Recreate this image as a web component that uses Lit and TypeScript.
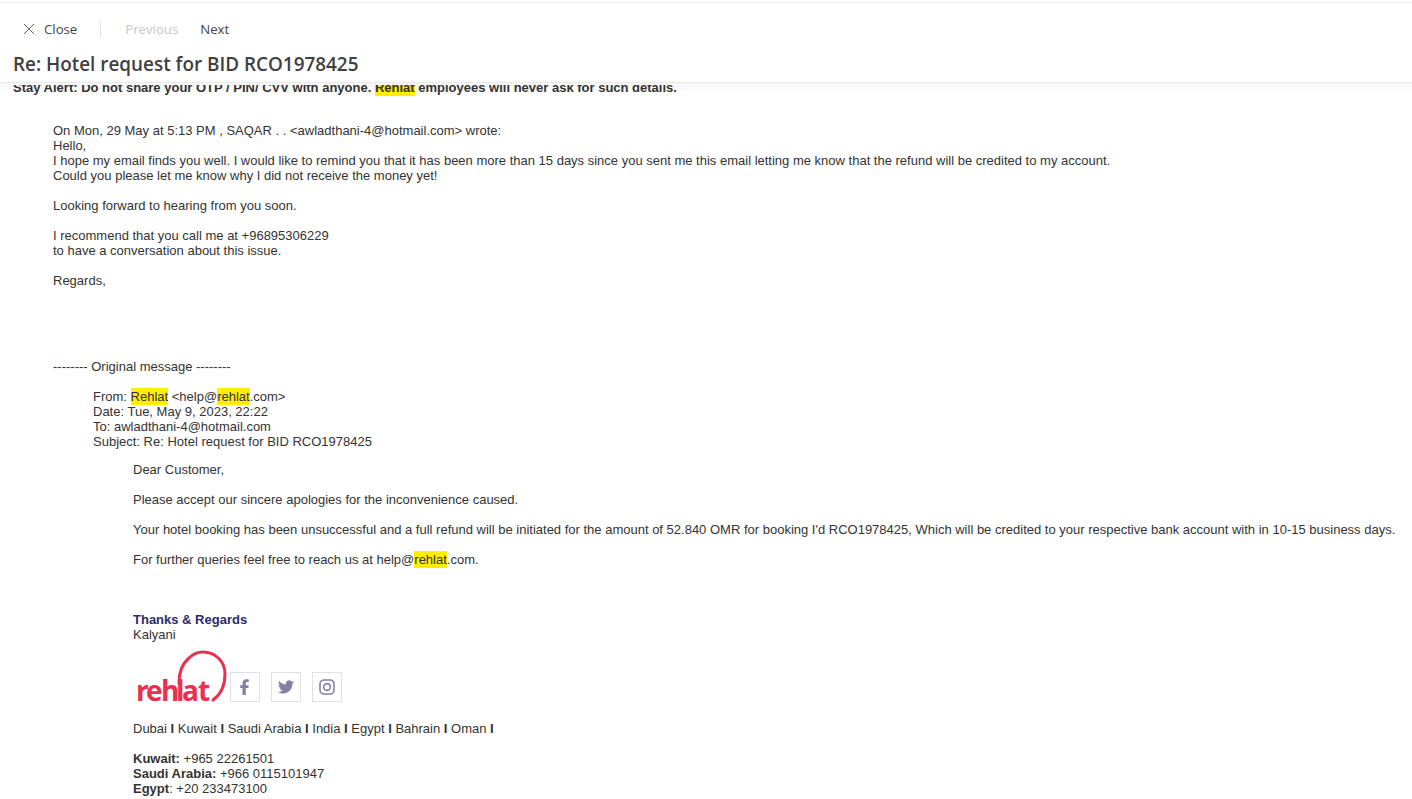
import { LitElement, html, css } from "lit";
import { customElement } from "lit/decorators.js";

@customElement("app-root")
export class AppRoot extends LitElement {
  static styles = css`
    :host {
      display: flex;
      flex-direction: column;
      height: 799px;
      overflow: hidden;
      background: #fff;
      font-family: "Liberation Sans", Arial, sans-serif;
      font-size: 13px;
      line-height: 15px;
      color: #333;
    }
    .panel {
      flex: none;
      height: 79px;
      margin-top: 2px;
      border-top: 1px solid #eeeeee;
      border-bottom: 1px solid #e8e8e8;
      background: #fff;
      font-family: "Open Sans", sans-serif;
      position: relative;
    }
    /* soft shadow under the header, lies over the message */
    .panel::after {
      content: "";
      position: absolute;
      left: 0;
      right: 0;
      top: 80px;
      height: 10px;
      z-index: 1;
      background: linear-gradient(rgba(0, 0, 0, 0.035), rgba(0, 0, 0, 0));
    }
    .bar {
      display: flex;
      align-items: center;
      height: 52px;
      padding-left: 23px;
      font-size: 13.2px;
      color: #444;
    }
    .bar svg {
      width: 12px;
      height: 12px;
      margin-right: 9px;
    }
    .sep {
      width: 1px;
      height: 18px;
      background: #e4e4e4;
      margin: 0 24px 0 23px;
    }
    .off {
      color: #c8c8c8;
      margin-right: 22px;
    }
    h1 {
      margin: -2px 0 0;
      padding-left: 13px;
      font-size: 18.9px;
      line-height: 22px;
      font-weight: 600;
      color: #403f3f;
    }
    .scroll {
      flex: 1;
      min-height: 0;
      margin-top: 2px;
      overflow: hidden;
      padding-left: 13px;
    }
    .inner {
      margin-top: -5px;
    }
    .alert {
      font-weight: 700;
      margin-bottom: 28px;
    }
    .q {
      margin-left: 40px;
    }
    p {
      margin: 0 0 15px;
    }
    .wide {
      white-space: nowrap;
    }
    mark {
      background: #ffee00;
      color: #333;
      padding: 1px 0;
    }
    .gap {
      height: 56px;
    }
    .head {
      margin-bottom: 13px;
    }
    .body p.lead {
      margin-bottom: 45px;
    }
    .thanks {
      font-weight: 700;
      color: #2c2a6b;
    }
    .sign {
      display: flex;
      align-items: flex-end;
      height: 58px;
      margin: 3px 0 18px;
    }
    .logo {
      width: 97px;
      height: 58px;
      flex: none;
    }
    .logo text {
      font-family: "Open Sans", sans-serif;
      font-weight: 700;
      font-size: 28px;
      fill: #e8304f;
    }
    .soc {
      width: 30px;
      height: 30px;
      flex: none;
      box-sizing: border-box;
      border: 1px solid #dfdfe8;
      margin-right: 11px;
      margin-bottom: 1px;
      display: flex;
      align-items: center;
      justify-content: center;
    }
    .soc svg {
      width: 16px;
      height: 16px;
      fill: #8280a6;
    }
    .soc svg.ig {
      fill: none;
      stroke: #8280a6;
      stroke-width: 2.4;
    }
  `;

  render() {
    return html`
      <div class="panel">
        <div class="bar">
          <svg viewBox="0 0 12 12" fill="none" stroke="#666" stroke-width="1">
            <path d="M1 1l10 10M11 1L1 11" />
          </svg>
          <span>Close</span>
          <span class="sep"></span>
          <span class="off">Previous</span>
          <span>Next</span>
        </div>
        <h1>Re: Hotel request for BID RCO1978425</h1>
      </div>
      <div class="scroll">
        <div class="inner">
          <div class="alert">
            Stay Alert: Do not share your OTP / PIN/ CVV with anyone. <mark>Rehlat</mark> employees will never ask for such details.
          </div>
          <div class="q">
            <p>
              On Mon, 29 May at 5:13 PM , SAQAR . . &lt;awladthani-4@hotmail.com&gt; wrote:<br />
              Hello,<br />
              I hope my email finds you well. I would like to remind you that it has been more than 15 days since you sent me this email letting me know that the refund will be credited to my account.<br />
              Could you please let me know why I did not receive the money yet!
            </p>
            <p>Looking forward to hearing from you soon.</p>
            <p>I recommend that you call me at +96895306229<br />to have a conversation about this issue.</p>
            <p>Regards,</p>
            <div class="gap"></div>
            <p>-------- Original message --------</p>
            <div class="q">
              <div class="head">
                From: <mark>Rehlat</mark> &lt;help@<mark>rehlat</mark>.com&gt;<br />
                Date: Tue, May 9, 2023, 22:22<br />
                To: awladthani-4@hotmail.com<br />
                Subject: Re: Hotel request for BID RCO1978425
              </div>
              <div class="q body">
                <p>Dear Customer,</p>
                <p>Please accept our sincere apologies for the inconvenience caused.</p>
                <p class="wide">Your hotel booking has been unsuccessful and a full refund will be initiated for the amount of 52.840 OMR for booking I'd RCO1978425, Which will be credited to your respective bank account with in 10-15 business days.</p>
                <p class="lead">For further queries feel free to reach us at help@<mark>rehlat</mark>.com.</p>
                <div class="thanks">Thanks &amp; Regards</div>
                <div>Kalyani</div>
                <div class="sign">
                  <svg class="logo" viewBox="0 0 97 58">
                    <path d="M46 38 C46 26 50 18 56 13 C60 9 65 7 70 7 C83 7 92 17 92 29 C92 41 87 50 80 55" fill="none" stroke="#e8304f" stroke-width="3" stroke-linecap="round" />
                    <text x="3 13 28 43 49 65" y="56">rehlat</text>
                  </svg>
                  <span class="soc">
                    <svg viewBox="0 0 16 16"><path d="M5.500 16V9H3.200V6.200h2.300V4.300C5.500 1.700 7 .3 9.400 .3c1 0 1.900.1 2.400.2v2.600h-1.500c-1.200 0-1.500.6-1.500 1.400v1.700h2.900L11.300 9H8.800v7z" /></svg>
                  </span>
                  <span class="soc">
                    <svg viewBox="1 3 22 18"><path d="M23 5c-.8.4-1.700.6-2.600.7.900-.6 1.700-1.400 2-2.500-.9.500-1.900.9-2.900 1.100A4.500 4.500 0 0 0 11.800 8.400C8 8.200 4.700 6.400 2.500 3.700c-1.200 2-.6 4.700 1.400 6-.7 0-1.400-.2-2-.6 0 2.200 1.500 4.100 3.600 4.600-.7.2-1.400.2-2 .1.600 1.800 2.300 3.100 4.200 3.100A9 9 0 0 1 1 18.800 12.800 12.800 0 0 0 20.700 7.400c.9-.6 1.700-1.400 2.300-2.400z" /></svg>
                  </span>
                  <span class="soc">
                    <svg class="ig" viewBox="0 0 24 24">
                      <rect x="1.500" y="1.500" width="21" height="21" rx="6" />
                      <circle cx="12" cy="12" r="5" />
                    </svg>
                  </span>
                </div>
                <p>Dubai <b>I</b> Kuwait <b>I</b> Saudi Arabia <b>I</b> India <b>I</b> Egypt <b>I</b> Bahrain <b>I</b> Oman <b>I</b></p>
                <div><b>Kuwait:</b> +965 22261501</div>
                <div><b>Saudi Arabia:</b> +966 0115101947</div>
                <div><b>Egypt</b>: +20 233473100</div>
                <div><b>UAE:</b> +971 42464646</div>
              </div>
            </div>
          </div>
        </div>
      </div>
    `;
  }
}
